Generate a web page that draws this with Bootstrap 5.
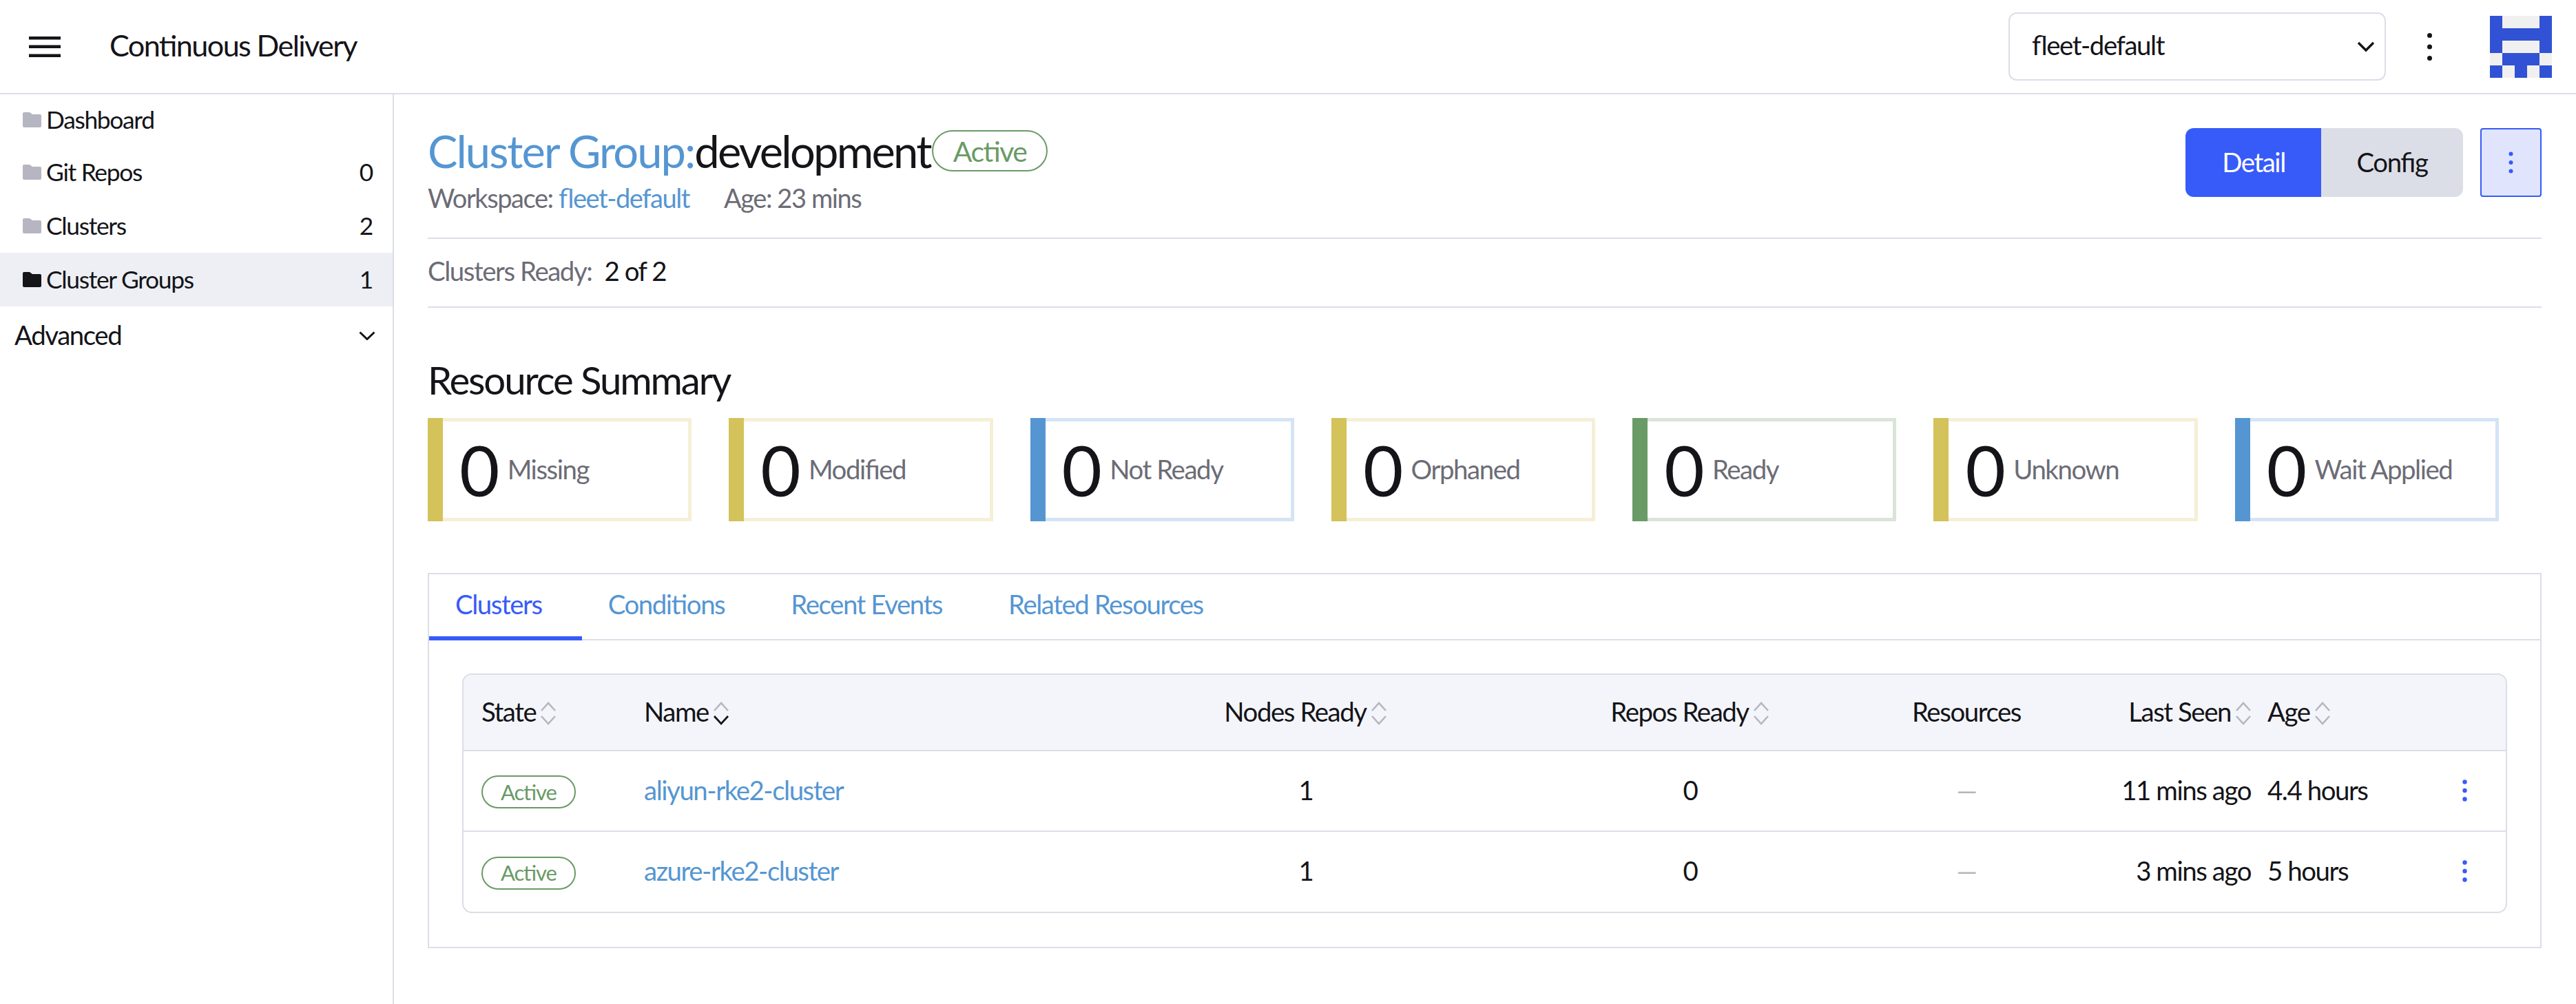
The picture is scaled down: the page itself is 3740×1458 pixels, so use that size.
<!DOCTYPE html>
<html lang="en">
<head>
<meta charset="utf-8">
<title>Continuous Delivery</title>
<link href="https://cdn.jsdelivr.net/npm/bootstrap@5.3.0/dist/css/bootstrap.min.css" rel="stylesheet">
<style>
:root{--ink:#141419;--mut:#6c6c76;--lnk:#5596d2;--pri:#375bf9;--line:#dcdee7;--grn:#6a9a66;--yel:#d4c25a;--blu:#5596d2;}
html,body{height:100%;}
body{font-family:"Lato","Liberation Sans",sans-serif;font-size:38.4px;color:var(--ink);background:#fff;overflow:hidden;}
body *{letter-spacing:-.0375em;font-feature-settings:"liga" 1;}
a{color:var(--lnk);text-decoration:none;}
.shell{height:100vh;}
.topbar{height:137px;border-bottom:2px solid var(--line);padding:0;flex-wrap:nowrap;}
.burger{margin-left:42px;width:46px;height:30px;}
.apptitle{margin-left:71px;font-size:43.2px;line-height:1;padding-bottom:3px;}
.nsselect{width:548px;height:99px;font-size:38.4px;color:var(--ink);border:2px solid var(--line);border-radius:12px;padding:0 50px 3px 32px;
  background-image:url("data:image/svg+xml,%3Csvg xmlns='http://www.w3.org/2000/svg' viewBox='0 0 26 16'%3E%3Cpath d='M2 2l11 11L24 2' fill='none' stroke='%23141419' stroke-width='3.4'/%3E%3C/svg%3E");
  background-size:26px 16px;background-position:right 14px center;}
.topkebab{width:7px;height:40px;margin:0 0 0 60px;display:block;}
.logo{width:90px;height:90px;margin:0 35px 0 84px;display:block;}
.sidenav{width:572px;flex:none;border-right:2px solid var(--line);}
.navrow{height:78px;padding:0 29px 0 33px;color:var(--ink);font-size:35.4px;}
.navrow.first{height:74px;}
.navrow.on{background:#edeff4;}
.navrow .fld{width:27px;height:22px;margin-right:7px;flex:none;}
.advrow{height:84px;padding:0 25px 0 21px;font-size:38.4px;}
.advrow svg{width:24px;height:13px;}
.content{padding:49px 50px 0 49px;min-width:0;}
.headtext{margin-top:-2px;}
.ttl{font-size:65px;line-height:70px;font-weight:400;margin:0;}
.ttl a{letter-spacing:-.03em;}
.ttl span{letter-spacing:-.042em;}
.pillbig{font-size:41px;font-weight:400;line-height:1;height:60px;padding:0 29px;border:2px solid var(--grn);border-radius:30px;color:var(--grn);background:#fff;margin-left:2px;}
.sub{color:var(--mut);margin-top:13px;line-height:40px;font-size:38px;}
.sub .age{margin-left:50px;}
.seg{height:100px;}
.seg .btn{font-size:38.4px;border:0;padding:0;border-radius:12px;}
.seg .btn-a{width:198px;background:var(--pri);color:#fff;}
.seg .btn-b{width:206px;background:var(--line);color:var(--ink);}
.morebtn{width:89px;height:100px;margin-left:25px;background:#e0e5fd;border:2px solid var(--pri);border-radius:4px;padding:0;}
.morebtn svg{width:7px;height:32px;}
.rulebox{border-top:2px solid var(--line);border-bottom:2px solid var(--line);height:102px;margin-top:38px;padding-bottom:4px;}
.rulebox .lab{color:var(--mut);margin-right:18px;}
.sumhead{font-size:56.4px;font-weight:400;line-height:60px;margin:74px 0 26px;}
.tiles{display:grid;grid-template-columns:repeat(7,383.3px);column-gap:54px;}
.tile{height:150px;}
.tilebar{width:22px;flex:none;}
.tilebody{border:5px solid;border-left:0;padding-left:24px;background:#fff;min-width:0;}
.tile .num{font-size:100.8px;line-height:1;margin-right:15px;}
.tile .txt{color:var(--mut);font-size:38.4px;}
.ty .tilebar{background:var(--yel);}.ty .tilebody{border-color:#f5efd6;}
.tb .tilebar{background:var(--blu);}.tb .tilebody{border-color:#d4e4f5;}
.tg .tilebar{background:var(--grn);}.tg .tilebody{border-color:#dae4d8;}
.panel{margin-top:75px;height:545px;border:2px solid var(--line);}
.tabsrow{height:96px;border-bottom:2px solid var(--line);flex-wrap:nowrap;}
.tabsrow .nav-link{height:96px;padding:0 58px 8px 38px;border:0;border-radius:0;font-size:38.4px;color:var(--lnk);background:none;display:flex;align-items:center;}
.tabsrow .nav-link.active{color:var(--pri);border-bottom:6px solid var(--pri);padding-bottom:2px;}
.tablewrap{margin:48px 48px 0;border:2px solid var(--line);border-radius:14px;overflow:hidden;}
.grid{table-layout:fixed;width:100%;margin:0;font-size:38.4px;color:var(--ink);border-collapse:separate;border-spacing:0;}
.grid th,.grid td{padding:0 0 2px;vertical-align:middle;font-weight:400;border-bottom:2px solid var(--line);background:transparent;box-shadow:none;}
.grid thead th{height:111px;background:#f4f5fa;}
.grid tbody td{height:117px;}
.grid tbody tr:last-child td{border-bottom:0;height:116px;}
.grid .c1{padding-left:26px;}
.grid .c6{text-align:right;padding-right:10px;}
.grid td.c6{padding-right:12px;}
.grid .c7{padding-left:12px;}
.sorter{width:26px;height:36px;margin-left:5px;vertical-align:-6px;}
.pillrow{display:inline-flex;align-items:center;height:48px;padding:0 26px;border:2px solid var(--grn);border-radius:24px;color:var(--grn);font-size:31px;line-height:1;font-weight:400;background:#fff;}
.dash{color:#b6b6c2;}
.rowmenu{width:7px;height:32px;display:block;margin-left:auto;margin-right:56px;}
</style>
</head>
<body>
<div class="shell d-flex flex-column">
  <nav class="navbar topbar bg-white d-flex align-items-center">
    <svg class="burger flex-none" viewBox="0 0 46 30" aria-hidden="true"><path d="M0 0h46v4.500H0zM0 12.500h46v4.500H0zM0 25.500h46v4.500H0z" fill="#141419"/></svg>
    <span class="apptitle me-auto">Continuous Delivery</span>
    <select class="form-select nsselect" aria-label="Workspace"><option>fleet-default</option></select>
    <svg class="topkebab" viewBox="0 0 7 40" aria-hidden="true"><circle cx="3.500" cy="3.500" r="3.500" fill="#141419"/><circle cx="3.500" cy="20" r="3.500" fill="#141419"/><circle cx="3.500" cy="36.500" r="3.500" fill="#141419"/></svg>
    <svg class="logo" viewBox="0 0 5 5" shape-rendering="crispEdges" aria-hidden="true"><rect width="5" height="5" fill="#f0f0f0"/><path d="M0 0h1v3H0zM4 0h1v3H4zM1 1h3v1H1zM1 3h3v1H1zM0 4h1v1H0zM2 4h1v1H2zM4 4h1v1H4z" fill="#3152d4"/></svg>
  </nav>
  <div class="d-flex flex-grow-1" style="min-height:0">
    <aside class="sidenav">
      <a class="navrow first d-flex align-items-center"><svg class="fld" viewBox="0 0 27 22" aria-hidden="true"><path d="M2 0h8l4 3h11a2 2 0 0 1 2 2v15a2 2 0 0 1-2 2H2a2 2 0 0 1-2-2V2a2 2 0 0 1 2-2z" fill="#b6b6c2"/></svg><span>Dashboard</span></a>
      <a class="navrow d-flex align-items-center"><svg class="fld" viewBox="0 0 27 22" aria-hidden="true"><path d="M2 0h8l4 3h11a2 2 0 0 1 2 2v15a2 2 0 0 1-2 2H2a2 2 0 0 1-2-2V2a2 2 0 0 1 2-2z" fill="#b6b6c2"/></svg><span>Git Repos</span><span class="ms-auto">0</span></a>
      <a class="navrow d-flex align-items-center"><svg class="fld" viewBox="0 0 27 22" aria-hidden="true"><path d="M2 0h8l4 3h11a2 2 0 0 1 2 2v15a2 2 0 0 1-2 2H2a2 2 0 0 1-2-2V2a2 2 0 0 1 2-2z" fill="#b6b6c2"/></svg><span>Clusters</span><span class="ms-auto">2</span></a>
      <a class="navrow on d-flex align-items-center"><svg class="fld" viewBox="0 0 27 22" aria-hidden="true"><path d="M2 0h8l4 3h11a2 2 0 0 1 2 2v15a2 2 0 0 1-2 2H2a2 2 0 0 1-2-2V2a2 2 0 0 1 2-2z" fill="#141419"/></svg><span>Cluster Groups</span><span class="ms-auto">1</span></a>
      <div class="advrow d-flex align-items-center justify-content-between"><span>Advanced</span><svg viewBox="0 0 24 13" aria-hidden="true"><path d="M1.500 1.500L12 11.500 22.500 1.500" fill="none" stroke="#141419" stroke-width="3"/></svg></div>
    </aside>
    <main class="content flex-grow-1">
      <div class="d-flex justify-content-between align-items-start">
        <div class="headtext">
          <div class="d-flex align-items-center">
            <h1 class="ttl"><a href="#">Cluster Group:</a><span>development</span></h1>
            <span class="badge pillbig d-inline-flex align-items-center">Active</span>
          </div>
          <div class="sub">Workspace: <a href="#">fleet-default</a><span class="age">Age: 23 mins</span></div>
        </div>
        <div class="d-flex">
          <div class="btn-group seg" role="group"><button class="btn btn-a" type="button">Detail</button><button class="btn btn-b" type="button">Config</button></div>
          <button class="morebtn d-flex align-items-center justify-content-center" type="button" aria-label="More"><svg viewBox="0 0 7 32" aria-hidden="true"><circle cx="3.500" cy="3.500" r="3" fill="#375bf9"/><circle cx="3.500" cy="16" r="3" fill="#375bf9"/><circle cx="3.500" cy="28.500" r="3" fill="#375bf9"/></svg></button>
        </div>
      </div>
      <div class="rulebox d-flex align-items-center"><span class="lab">Clusters Ready:</span><span>2 of 2</span></div>
      <h2 class="sumhead">Resource Summary</h2>
      <div class="tiles">
        <div class="tile ty d-flex"><div class="tilebar"></div><div class="tilebody flex-grow-1 d-flex align-items-center"><span class="num">0</span><span class="txt">Missing</span></div></div>
        <div class="tile ty d-flex"><div class="tilebar"></div><div class="tilebody flex-grow-1 d-flex align-items-center"><span class="num">0</span><span class="txt">Modified</span></div></div>
        <div class="tile tb d-flex"><div class="tilebar"></div><div class="tilebody flex-grow-1 d-flex align-items-center"><span class="num">0</span><span class="txt">Not Ready</span></div></div>
        <div class="tile ty d-flex"><div class="tilebar"></div><div class="tilebody flex-grow-1 d-flex align-items-center"><span class="num">0</span><span class="txt">Orphaned</span></div></div>
        <div class="tile tg d-flex"><div class="tilebar"></div><div class="tilebody flex-grow-1 d-flex align-items-center"><span class="num">0</span><span class="txt">Ready</span></div></div>
        <div class="tile ty d-flex"><div class="tilebar"></div><div class="tilebody flex-grow-1 d-flex align-items-center"><span class="num">0</span><span class="txt">Unknown</span></div></div>
        <div class="tile tb d-flex"><div class="tilebar"></div><div class="tilebody flex-grow-1 d-flex align-items-center"><span class="num">0</span><span class="txt">Wait Applied</span></div></div>
      </div>
      <section class="panel">
        <ul class="nav tabsrow">
          <li class="nav-item"><a class="nav-link active" href="#">Clusters</a></li>
          <li class="nav-item"><a class="nav-link" href="#">Conditions</a></li>
          <li class="nav-item"><a class="nav-link" href="#">Recent Events</a></li>
          <li class="nav-item"><a class="nav-link" href="#">Related Resources</a></li>
        </ul>
        <div class="tablewrap">
          <table class="table grid">
            <colgroup><col style="width:262px"><col style="width:657px"><col style="width:608px"><col style="width:508px"><col style="width:294px"><col style="width:278px"><col style="width:240px"><col></colgroup>
            <thead><tr>
              <th class="c1">State<svg class="sorter" viewBox="0 0 26 36" aria-hidden="true"><path d="M3 14L13 3l10 11M3 22l10 11 10-11" fill="none" stroke="#b6b6c2" stroke-width="2.600"/></svg></th>
              <th>Name<svg class="sorter" viewBox="0 0 26 36" aria-hidden="true"><path d="M3 14L13 3l10 11" fill="none" stroke="#b6b6c2" stroke-width="2.600"/><path d="M3 22l10 11 10-11" fill="none" stroke="#141419" stroke-width="2.800"/></svg></th>
              <th class="text-center">Nodes Ready<svg class="sorter" viewBox="0 0 26 36" aria-hidden="true"><path d="M3 14L13 3l10 11M3 22l10 11 10-11" fill="none" stroke="#b6b6c2" stroke-width="2.600"/></svg></th>
              <th class="text-center">Repos Ready<svg class="sorter" viewBox="0 0 26 36" aria-hidden="true"><path d="M3 14L13 3l10 11M3 22l10 11 10-11" fill="none" stroke="#b6b6c2" stroke-width="2.600"/></svg></th>
              <th class="text-center">Resources</th>
              <th class="c6">Last Seen<svg class="sorter" viewBox="0 0 26 36" aria-hidden="true"><path d="M3 14L13 3l10 11M3 22l10 11 10-11" fill="none" stroke="#b6b6c2" stroke-width="2.600"/></svg></th>
              <th class="c7">Age<svg class="sorter" viewBox="0 0 26 36" aria-hidden="true"><path d="M3 14L13 3l10 11M3 22l10 11 10-11" fill="none" stroke="#b6b6c2" stroke-width="2.600"/></svg></th>
              <th></th>
            </tr></thead>
            <tbody>
              <tr>
                <td class="c1"><span class="badge pillrow">Active</span></td>
                <td><a href="#">aliyun-rke2-cluster</a></td>
                <td class="text-center">1</td><td class="text-center">0</td><td class="text-center dash">—</td>
                <td class="c6">11 mins ago</td><td class="c7">4.4 hours</td>
                <td><svg class="rowmenu" viewBox="0 0 7 32" aria-hidden="true"><circle cx="3.500" cy="3.500" r="3.200" fill="#375bf9"/><circle cx="3.500" cy="16" r="3.200" fill="#375bf9"/><circle cx="3.500" cy="28.500" r="3.200" fill="#375bf9"/></svg></td>
              </tr>
              <tr>
                <td class="c1"><span class="badge pillrow">Active</span></td>
                <td><a href="#">azure-rke2-cluster</a></td>
                <td class="text-center">1</td><td class="text-center">0</td><td class="text-center dash">—</td>
                <td class="c6">3 mins ago</td><td class="c7">5 hours</td>
                <td><svg class="rowmenu" viewBox="0 0 7 32" aria-hidden="true"><circle cx="3.500" cy="3.500" r="3.200" fill="#375bf9"/><circle cx="3.500" cy="16" r="3.200" fill="#375bf9"/><circle cx="3.500" cy="28.500" r="3.200" fill="#375bf9"/></svg></td>
              </tr>
            </tbody>
          </table>
        </div>
      </section>
    </main>
  </div>
</div>
<script src="https://cdn.jsdelivr.net/npm/bootstrap@5.3.0/dist/js/bootstrap.bundle.min.js"></script>
</body>
</html>
